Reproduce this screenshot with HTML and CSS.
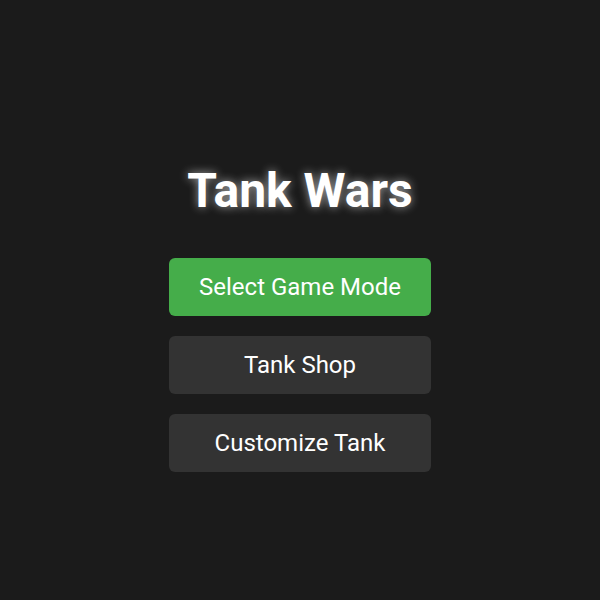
FILE: index.html
```html
<!DOCTYPE html>
<html>
<head>
<meta charset="utf-8">
<link rel="stylesheet" href="styles.css">
</head>
<body>
<main class="menu">
  <h1 class="title">Tank Wars</h1>
  <div class="buttons">
    <button class="btn btn-primary">Select Game Mode</button>
    <button class="btn">Tank Shop</button>
    <button class="btn">Customize Tank</button>
  </div>
</main>
</body>
</html>
```
FILE: styles.css
```css
html, body {
  margin: 0;
  padding: 0;
  background: #1b1b1b;
  height: 100%;
}
body {
  font-family: Roboto, "Liberation Sans", sans-serif;
  color: #fff;
}
.menu {
  display: flex;
  flex-direction: column;
  align-items: center;
  padding-top: 163px;
}
.title {
  margin: 0 0 39px;
  font-size: 48px;
  font-weight: 700;
  line-height: 56px;
  text-shadow: 0 0 10px rgba(255,255,255,0.6);
}
.buttons {
  display: flex;
  flex-direction: column;
  gap: 20px;
}
.btn {
  width: 262px;
  height: 58px;
  border: none;
  border-radius: 6px;
  background: #333333;
  color: #fff;
  font-family: Roboto, "Liberation Sans", sans-serif;
  font-size: 24px;
  font-weight: 400;
  padding: 0;
}
.btn-primary {
  background: #45ad4a;
}
```
